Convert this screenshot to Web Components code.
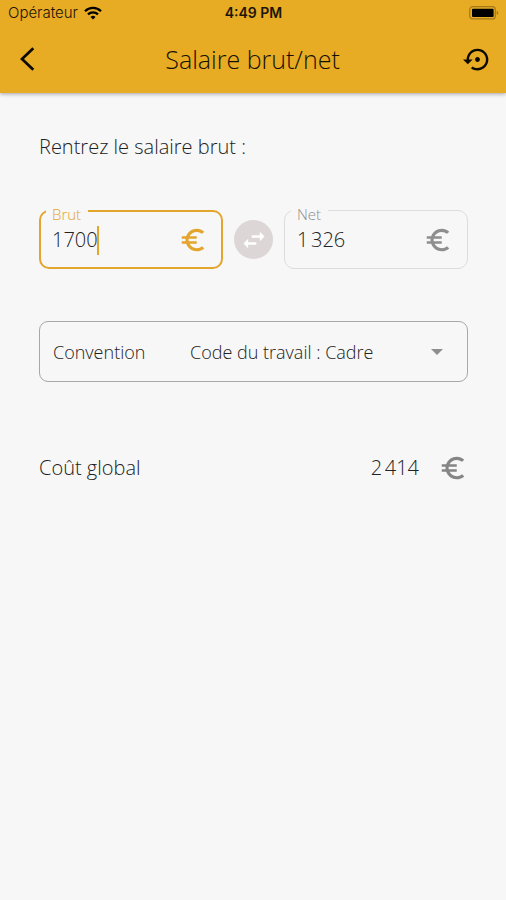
<!DOCTYPE html>
<html lang="fr">
<head>
<meta charset="utf-8">
<meta name="viewport" content="width=device-width, initial-scale=1">
<title>Salaire brut/net</title>
<style>
  :root { --brand: #e7ab24; --accent: #e3a52c; --ink: #222; --muted: #8e8e8e; --page: #f7f7f7; }
  body { margin: 0; min-height: 100vh; background: var(--page); color: var(--ink); font-family: "Open Sans", "Noto Sans", sans-serif; font-weight: 300; }
</style>
</head>
<body>
<salary-app></salary-app>
<script>
const define = (name, html, setup) => {
  const template = document.createElement('template');
  template.innerHTML = html;
  customElements.define(name, class extends HTMLElement {
    connectedCallback() {
      if (this.shadowRoot) return;
      const root = this.attachShadow({ mode: 'open' });
      root.append(template.content.cloneNode(true));
      if (setup) setup(this, root);
    }
  });
};

define('euro-icon', `
  <style>:host { display: block; flex: none; width: 30px; height: 30px; } svg { display: block; width: 100%; height: 100%; fill: currentColor; }</style>
  <svg viewBox="0 0 24 24" aria-hidden="true"><path d="M15 18.5c-2.51 0-4.68-1.42-5.76-3.5H15v-2H8.58c-.05-.33-.08-.66-.08-1s.03-.67.08-1H15V9H9.24C10.32 6.92 12.5 5.5 15 5.5c1.61 0 3.09.59 4.23 1.57L21 5.3C19.41 3.87 17.3 3 15 3c-3.92 0-7.24 2.51-8.48 6H3v2h3.06c-.04.33-.06.66-.06 1s.02.67.06 1H3v2h3.52c1.24 3.49 4.56 6 8.48 6 2.31 0 4.41-.87 6-2.3l-1.78-1.77c-1.13.98-2.6 1.57-4.22 1.57z"/></svg>`);

define('status-bar', `
  <style>
    :host { display: grid; grid-template-columns: 1fr auto 1fr; align-items: center; height: 26px; padding: 0 7px 0 8px; color: #1c1608; font: 400 15px/20px Inter, Roboto, sans-serif; }
    .carrier { display: flex; align-items: center; gap: 6px; font-weight: 300; }
    .time { font-size: 14px; font-weight: 600; }
    .battery { justify-self: end; }
    svg { display: block; }
  </style>
  <span class="carrier"><span>Opérateur</span>
    <svg width="18" height="14" viewBox="0 0 18 14" fill="none" stroke="#000" stroke-width="2.3" aria-hidden="true"><path d="M1 5.2a11.3 11.3 0 0 1 16 0M4 8.4a7.1 7.1 0 0 1 10 0"/><path d="M9 13.5 6.5 11a3.6 3.6 0 0 1 5 0z" fill="#000" stroke="none"/></svg>
  </span>
  <span class="time">4:49 PM</span>
  <svg class="battery" width="30" height="14" viewBox="0 0 30 14" aria-label="Batterie pleine"><rect x=".7" y=".7" width="25.6" height="12.2" rx="3" fill="none" stroke="#a37919" stroke-width="1.2"/><rect x="3" y="2.7" width="21.6" height="8.2" rx="1" fill="#000"/><path d="M27.7 4.7c2.2 1 2.2 3.2 0 4.2z" fill="#a37919"/></svg>`);

define('app-bar', `
  <style>
    :host { display: block; background: var(--brand); box-shadow: 0 1px 4px rgba(0,0,0,.35); }
    .bar { display: grid; grid-template-columns: 48px 1fr 48px; align-items: center; height: 66px; padding: 0 5px 1px 4px; }
    h1 { margin: 0; text-align: center; font-size: 25px; line-height: 32px; font-weight: 300; color: #171103; }
    button { display: grid; place-items: center; width: 48px; height: 48px; padding: 0; border: 0; background: none; color: #0d0a02; }
    svg { display: block; }
  </style>
  <slot></slot>
  <div class="bar">
    <button aria-label="Retour"><svg width="28" height="28" viewBox="0 0 28 28" fill="none" stroke="currentColor" stroke-width="2.7"><path d="M19.3 3.3 8 14l11.3 10.7"/></svg></button>
    <h1></h1>
    <button aria-label="Réinitialiser"><svg width="29" height="29" viewBox="0 0 24 24" fill="currentColor"><path d="M14 12c0-1.1-.9-2-2-2s-2 .9-2 2 .9 2 2 2 2-.9 2-2zm-2-9c-4.97 0-9 4.03-9 9H0l4 4 4-4H5c0-3.87 3.13-7 7-7s7 3.13 7 7-3.13 7-7 7c-1.51 0-2.91-.49-4.06-1.3l-1.42 1.44C8.04 20.3 9.94 21 12 21c4.97 0 9-4.03 9-9s-4.03-9-9-9z"/></svg></button>
  </div>`, (host, root) => { root.querySelector('h1').textContent = host.getAttribute('heading'); });

define('money-field', `
  <style>
    :host { display: block; flex: 1 1 0; min-width: 0; color: var(--muted); --line: 1px solid #dcdcdc; }
    :host([active]) { color: var(--accent); --line: 2px solid var(--accent); }
    fieldset { box-sizing: border-box; height: 70px; min-width: 0; margin: 0; padding: 0 14px 0 12px; border: var(--line); border-radius: 10px; }
    :host([active]) fieldset { padding: 0 13px 0 11px; }
    legend { margin-left: -6px; padding: 7px 7px 0 6px; font-size: 15px; line-height: 16px; }
    label { display: block; }
    .row { display: flex; align-items: center; height: 36px; }
    input { field-sizing: content; min-width: 0; padding: 0; border: 0; outline: 0; background: none; color: var(--ink); font: 300 20px/30px "Open Sans", sans-serif; }
    .caret { display: none; width: 2px; height: 29px; margin-left: -1px; background: currentColor; }
    :host([active]) .caret { display: block; }
    euro-icon { margin-left: auto; }
  </style>
  <fieldset>
    <legend><label for="amount"></label></legend>
    <div class="row"><input id="amount" inputmode="numeric"><span class="caret"></span><euro-icon></euro-icon></div>
  </fieldset>`, (host, root) => {
    root.querySelector('label').textContent = host.getAttribute('label');
    root.querySelector('input').value = host.getAttribute('value');
  });

define('swap-button', `
  <style>
    :host { display: block; flex: none; margin-bottom: 10px; }
    button { display: grid; place-items: center; width: 39px; height: 39px; padding: 0; border: 0; border-radius: 50%; background: #dcd6d6; color: #fff; }
    svg { display: block; }
  </style>
  <button aria-label="Inverser brut et net"><svg width="28" height="28" viewBox="0 0 24 24" fill="currentColor"><path d="M6.99 11 3 15l3.99 4v-3H14v-2H6.99v-3zM21 9l-3.99-4v3H10v2h7.01v3L21 9z"/></svg></button>`);

define('convention-select', `
  <style>
    :host { display: grid; grid-template-columns: 137px 1fr; align-items: center; box-sizing: border-box; height: 61px; padding: 0 23px 0 13px; border: 1px solid #a8a8a8; border-radius: 9px; font-size: 18px; line-height: 24px; }
    .choice { display: grid; align-items: center; }
    select, svg { grid-area: 1 / 1; }
    select { appearance: none; width: 100%; height: 40px; padding: 0 20px 0 0; border: 0; outline: 0; background: none; color: inherit; font: inherit; }
    svg { justify-self: end; pointer-events: none; }
  </style>
  <label for="convention">Convention</label>
  <div class="choice">
    <select id="convention"><option>Code du travail : Cadre</option><option>Code du travail : Non cadre</option></select>
    <svg width="14" height="8" viewBox="0 0 14 8" fill="#8e8e8e" aria-hidden="true"><path d="M1 1h12L7 7z"/></svg>
  </div>`);

define('total-row', `
  <style>
    :host { display: flex; align-items: center; gap: 19px; font-size: 20px; line-height: 28px; }
    .label { flex: 1; }
    euro-icon { color: #858585; }
  </style>
  <span class="label"><slot name="label"></slot></span><span><slot></slot></span><euro-icon></euro-icon>`);

define('salary-app', `
  <style>
    :host { display: block; }
    main { display: flex; flex-direction: column; padding: 40px 38px 40px 39px; }
    p { margin: 0; font-size: 20px; line-height: 28px; }
    .fields { display: flex; align-items: flex-end; gap: 11px; margin-top: 38px; }
    convention-select { margin-top: 52px; }
    total-row { margin-top: 71px; }
  </style>
  <app-bar heading="Salaire brut/net"><status-bar></status-bar></app-bar>
  <main>
    <p>Rentrez le salaire brut :</p>
    <div class="fields">
      <money-field label="Brut" value="1700" active></money-field>
      <swap-button></swap-button>
      <money-field label="Net" value="1&#8239;326"></money-field>
    </div>
    <convention-select></convention-select>
    <total-row><span slot="label">Coût global</span>2&#8239;414</total-row>
  </main>`);
</script>
</body>
</html>
